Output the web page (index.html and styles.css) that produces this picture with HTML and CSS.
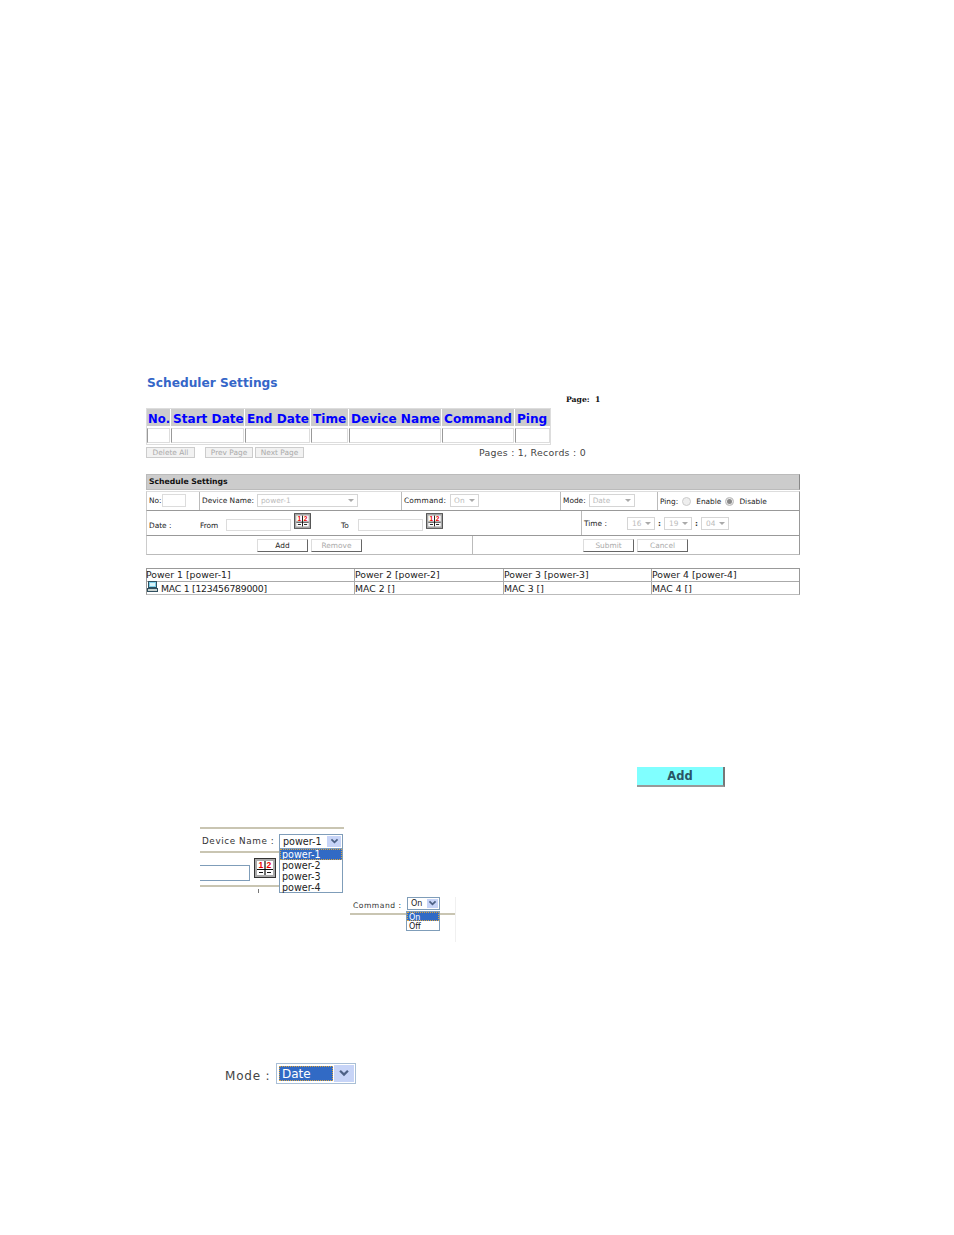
FILE: index.html
```html
<!DOCTYPE html>
<html lang="en">
<head>
<meta charset="utf-8">
<title>Scheduler Settings</title>
<link rel="stylesheet" href="styles.css">
</head>
<body>
<main class="page">
  <section class="panel">
    <h1 class="title">Scheduler Settings</h1>
    <div class="page-no">Page:&nbsp; 1</div>
    <div class="records">
      <div class="rec-row">
        <div class="rh c-no">No.</div><div class="rh c-start">Start Date</div><div class="rh c-end">End Date</div><div class="rh c-time">Time</div><div class="rh c-dev">Device Name</div><div class="rh c-cmd">Command</div><div class="rh c-ping">Ping</div>
      </div>
      <div class="rec-row body-row">
        <div class="rd c-no"></div><div class="rd c-start"></div><div class="rd c-end"></div><div class="rd c-time"></div><div class="rd c-dev"></div><div class="rd c-cmd"></div><div class="rd c-ping"></div>
      </div>
    </div>
    <div class="pager">
      <button class="btn b-del">Delete All</button>
      <button class="btn b-prev">Prev Page</button>
      <button class="btn b-next">Next Page</button>
      <span class="count">Pages : 1, Records : 0</span>
    </div>

    <div class="settings">
      <div class="set-head">Schedule Settings</div>
      <div class="set-row r1">
        <div class="cell s-no">No:<span class="inp i-no"></span></div>
        <div class="cell s-dev">Device Name:<span class="sel sl-dev">power-1<i class="caret"></i></span></div>
        <div class="cell s-cmd"><span class="l-cmd">Command:</span><span class="sel sl-cmd">On<i class="caret"></i></span></div>
        <div class="cell s-mode">Mode:<span class="sel sl-mode">Date<i class="caret"></i></span></div>
        <div class="cell s-ping">Ping:<i class="radio"></i><span>Enable</span><i class="radio on"></i><span>Disable</span></div>
      </div>
      <div class="set-row r2">
        <div class="cell s-date">
          <span class="l-date">Date :</span><span class="l-from">From</span><span class="inp i-date"></span>
          <svg class="cal" viewBox="0 0 22 20"><rect x=".5" y=".5" width="21" height="19" fill="#aaa" stroke="#333"/><rect x="3" y="3" width="16" height="14" fill="#fff"/><text x="4.6" y="10" class="cal-n">1</text><text x="12.6" y="10" class="cal-n">2</text><path d="M3 11.5h16M5 14.5h4M13 14.5h4M11 3v14" stroke="#111" stroke-width="1.2"/></svg>
          <span class="l-to">To</span><span class="inp i-date"></span>
          <svg class="cal" viewBox="0 0 22 20"><rect x=".5" y=".5" width="21" height="19" fill="#aaa" stroke="#333"/><rect x="3" y="3" width="16" height="14" fill="#fff"/><text x="4.6" y="10" class="cal-n">1</text><text x="12.6" y="10" class="cal-n">2</text><path d="M3 11.5h16M5 14.5h4M13 14.5h4M11 3v14" stroke="#111" stroke-width="1.2"/></svg>
        </div>
        <div class="cell s-time">
          <span class="l-time">Time :</span><span class="sel sl-t">16<i class="caret"></i></span><b>:</b><span class="sel sl-t">19<i class="caret"></i></span><b>:</b><span class="sel sl-t">04<i class="caret"></i></span>
        </div>
      </div>
      <div class="set-row r3">
        <div class="cell s-left"><button class="btn2 dark">Add</button><button class="btn2">Remove</button></div>
        <div class="cell s-right"><button class="btn2">Submit</button><button class="btn2">Cancel</button></div>
      </div>
    </div>

    <div class="power">
      <div class="p-row top">
        <div class="p-cell p1">Power 1 [power-1]</div><div class="p-cell p2">Power 2 [power-2]</div><div class="p-cell p3">Power 3 [power-3]</div><div class="p-cell p4">Power 4 [power-4]</div>
      </div>
      <div class="p-row">
        <div class="p-cell p1"><svg class="pc" viewBox="0 0 11 11"><rect x="1.5" y=".5" width="8" height="6" fill="#7fd0ea" stroke="#2f4f5f"/><rect x="3" y="2" width="5" height="3" fill="#d8f4fa"/><rect x=".5" y="7.5" width="10" height="3" fill="#c9d2cf" stroke="#2f4f5f"/></svg><span class="mac1">MAC 1 [123456789000]</span></div><div class="p-cell p2">MAC 2 []</div><div class="p-cell p3">MAC 3 []</div><div class="p-cell p4">MAC 4 []</div>
      </div>
    </div>
  </section>

  <section class="fig-add"><button class="cyan">Add</button></section>

  <section class="fig-device">
    <div class="rule"></div>
    <div class="dev-row"><span class="dev-label">Device Name :</span>
      <span class="xp-sel dev-sel">power-1<i class="xp-arrow"><svg viewBox="0 0 10 8"><path d="M1.5 1.5 5 5l3.5-3.5" fill="none" stroke="#4d6185" stroke-width="2"/></svg></i></span></div>
    <div class="rule short r-a"></div>
    <div class="date-row"><span class="xp-inp"></span>
      <svg class="cal big" viewBox="0 0 22 20"><rect x=".5" y=".5" width="21" height="19" fill="#aaa" stroke="#333"/><rect x="3" y="3" width="16" height="14" fill="#fff"/><text x="4.6" y="10" class="cal-n">1</text><text x="12.6" y="10" class="cal-n">2</text><path d="M3 11.5h16M5 14.5h4M13 14.5h4M11 3v14" stroke="#111" stroke-width="1.2"/></svg></div>
    <div class="rule short r-b"></div>
    <i class="tick"></i>
    <div class="xp-list dev-list"><div class="opt on">power-1</div><div class="opt">power-2</div><div class="opt">power-3</div><div class="opt">power-4</div></div>
  </section>

  <section class="fig-cmd">
    <div class="cmd-row"><span class="cmd-label">Command :</span>
      <span class="xp-sel cmd-sel">On<i class="xp-arrow"><svg viewBox="0 0 10 8"><path d="M1.5 1.5 5 5l3.5-3.5" fill="none" stroke="#4d6185" stroke-width="2"/></svg></i></span></div>
    <div class="rule cmd-rule"></div>
    <div class="xp-list cmd-list"><div class="opt on">On</div><div class="opt">Off</div></div>
  </section>

  <section class="fig-mode">
    <span class="mode-label">Mode :</span>
    <span class="xp-sel mode-sel"><span class="mode-val">Date</span><i class="xp-arrow"><svg viewBox="0 0 10 8"><path d="M1.5 1.5 5 5l3.5-3.5" fill="none" stroke="#4d6185" stroke-width="2"/></svg></i></span>
  </section>
</main>
</body>
</html>
```
FILE: styles.css
```css
* { box-sizing: border-box; }
html, body { margin: 0; background: #fff; }
body { font-family: "DejaVu Sans", sans-serif; color: #222; }
.page { width: 954px; height: 1235px; overflow: hidden; padding-top: 375px; }
button { font-family: inherit; padding: 0; }

.panel { margin-left: 146px; width: 654px; height: 220px; }
.title { margin: 0 0 0 1px; font-size: 12.2px; line-height: 16px; font-weight: bold; color: #3566c8; }
.page-no { margin: 3px 0 0 420px; height: 10px; font: bold 7.7px/12px "DejaVu Serif", serif; color: #111; }
.records { margin: 4px 0 0 0; width: 405px; height: 37px; border: 1px solid #ddd; }
.rec-row { display: flex; gap: 1px; height: 17px; }
.body-row { margin-top: 2px; height: 15px; }
.rh { background: #ccc; color: #00f; font-size: 12.1px; font-weight: bold; line-height: 20px; padding-left: 2px; white-space: nowrap; }
.rh.c-no { padding-left: 1px; font-size: 11.6px; }
.rd { border: 1px solid #ddd; border-left-color: #999; }
.c-no { width: 23px; } .c-start { width: 73px; } .c-end { width: 65px; } .c-time { width: 37px; } .c-dev { width: 92px; } .c-cmd { width: 72px; } .c-ping { width: 35px; }

.pager { display: flex; align-items: center; height: 11px; margin-top: 2px; }
.btn { height: 11px; background: #f2f2f2; border: 1px solid #ccc; color: #aaa; font-size: 7.4px; line-height: 9px; }
.b-del { width: 49px; } .b-prev { width: 48px; margin-left: 10px; } .b-next { width: 49px; margin-left: 2px; }
.count { margin-left: 175px; font-size: 9.4px; letter-spacing: .27px; color: #444; white-space: nowrap; }

.settings { margin-top: 16px; width: 654px; height: 81px; font-size: 7.4px; color: #222; }
.set-head { height: 16px; background: #ccc; border: 1px solid #bbb; border-right-color: #888; font-size: 7.7px; font-weight: bold; line-height: 14px; padding-left: 2px; color: #111; }
.set-row { display: flex; border-right: 1px solid #999; border-bottom: 1px solid #999; border-left: 1px solid #ccc; }
.r1 { margin-top: 1px; height: 20px; border-top: 1px solid #ddd; }
.r2 { height: 25px; }
.r3 { height: 19px; border-bottom-color: #bbb; }
.cell { display: flex; align-items: center; height: 100%; border-right: 1px solid #bbb; white-space: nowrap; padding-left: 2px; }
.cell:last-child { border-right: 0; }
.s-no { width: 53px; padding-bottom: 1px; } .s-dev { width: 202px; padding-left: 2px; padding-bottom: 1px; } .s-cmd { width: 159px; padding-bottom: 1px; } .s-mode { width: 97px; padding-bottom: 1px; }
.s-ping { flex: 1; padding-left: 2px; }
.l-cmd { letter-spacing: .2px; }
.inp { display: inline-block; background: #fff; border: 1px solid #dcdcdc; }
.i-no { width: 24px; height: 13px; }
.sel { position: relative; display: inline-block; height: 13px; border: 1px solid #d5d5d5; color: #bbb; line-height: 11px; padding-left: 3px; background: #fff; }
.caret { position: absolute; right: 3px; top: 4px; width: 0; height: 0; border: 3px solid transparent; border-top: 3px solid #aaa; border-bottom: 0; }
.sl-dev { width: 101px; margin-left: 3px; }
.sl-cmd { width: 29px; margin-left: 4px; }
.sl-mode { width: 46px; margin-left: 3px; }
.radio { display: inline-block; width: 9px; height: 9px; border-radius: 50%; border: 1px solid #ccc; background: #eee; margin: 0 5px 0 4px; }
.radio.on { background: #888; box-shadow: inset 0 0 0 1px #eee; margin-left: 4px; }
.s-date { width: 435px; padding-left: 2px; padding-top: 3px; }
.l-date { width: 51px; padding-top: 2px; } .l-from { width: 26px; padding-top: 2px; }
.i-date { width: 65px; height: 12px; }
.cal { width: 17px; height: 16px; margin: -8px 0 0 3px; }
.cal-n { font: bold 8.5px "Liberation Sans", sans-serif; fill: #e00; }
.l-to { margin-left: 30px; width: 17px; padding-top: 2px; }
.s-time { flex: 1; padding-left: 2px; }
.l-time { width: 43px; }
.sl-t { width: 28px; padding-left: 4px; }
.sl-t:first-of-type { width: 29px; }
.s-time b { margin: 0 3px; font-weight: bold; color: #333; }
.btn2 { height: 13px; background: #fff; border: 1px solid #ddd; border-right: 1px solid #666; border-bottom: 1px solid #666; color: #aaa; font-size: 7.4px; width: 51px; }
.btn2.dark { color: #222; border-top-color: #ddd; }
.s-left { width: 326px; padding-left: 110px; gap: 3px; }
.s-right { flex: 1; padding-left: 110px; gap: 3px; }

.power { margin-top: 13px; width: 654px; height: 27px; border: 1px solid #999; border-bottom-color: #bbb; font-size: 9.3px; color: #222; }
.p-row { display: flex; height: 12px; }
.p-row.top .p-cell { padding-bottom: 2px; }
.p-row.top .p1 { text-indent: -1px; }
.p-row + .p-row { height: 13px; border-top: 1px solid #aaa; }
.p-cell { display: flex; align-items: center; height: 100%; border-right: 1px solid #aaa; white-space: nowrap; }
.p-cell:last-child { border-right: 0; }
.p1 { width: 208px; } .p2 { width: 149px; } .p3 { width: 148px; } .p4 { flex: 1; }
.pc { width: 11px; height: 11px; margin: -3px 3px 0 0; }
.mac1 { letter-spacing: -.25px; }

.fig-add { margin: 170px 0 0 637px; height: 20px; }
.cyan { width: 88px; height: 20px; background: #80ffff; border: 0; border-right: 2px solid #777; border-bottom: 2px solid #999; font-size: 11.5px; font-weight: bold; color: #2a5566; line-height: 18px; }

.rule { height: 2px; background: #c9c5b2; }
.fig-device { position: relative; margin: 42px 0 0 200px; width: 144px; height: 66px; }
.dev-row { display: flex; align-items: center; height: 16px; margin-top: 4px; }
.dev-label { width: 79px; padding-left: 2px; font-size: 8.8px; letter-spacing: .6px; color: #333; white-space: nowrap; }
.xp-sel { position: relative; display: inline-block; border: 1px solid #7f9db9; background: #fff; color: #222; white-space: nowrap; }
.dev-sel { width: 64px; height: 15px; font-size: 9.6px; line-height: 13px; padding-left: 3px; }
.xp-arrow { position: absolute; top: 1px; right: 1px; bottom: 1px; display: flex; align-items: center; justify-content: center; width: 14px; background: #c7d4f7; }
.xp-arrow svg { width: 9px; height: 7px; }
.short { width: 79px; }
.r-a { margin-top: 2px; }
.date-row { display: flex; align-items: center; height: 30px; }
.xp-inp { width: 50px; height: 16px; margin-top: 10px; background: #fff; border: 1px solid #7f9db9; border-left: 0; }
.cal.big { width: 22px; height: 20px; margin: 0 0 0 4px; }
.r-b { margin-top: 2px; }
.tick { display: block; width: 1px; height: 4px; margin: 2px 0 0 58px; background: #777; }
.xp-list { position: absolute; background: #fff; border: 1px solid #7f9db9; color: #222; }
.dev-list { left: 79px; top: 21px; width: 64px; height: 45px; font-size: 9.6px; line-height: 11px; }
.opt { padding-left: 2px; height: 11px; white-space: nowrap; }
.opt.on { background: #316ac5; color: #fff; outline: 1px dotted #d9a441; outline-offset: -1px; }

.fig-cmd { position: relative; margin: 4px 0 0 350px; width: 106px; height: 45px; border-right: 1px solid #f0f0f0; }
.cmd-row { display: flex; align-items: center; height: 13px; margin-top: 1px; }
.cmd-label { width: 57px; padding: 4px 0 0 3px; font-size: 7.6px; letter-spacing: .5px; color: #333; white-space: nowrap; }
.cmd-sel { width: 33px; height: 13px; font-size: 8px; line-height: 11px; padding-left: 3px; }
.cmd-sel .xp-arrow { width: 11px; }
.cmd-rule { margin-top: 3px; }
.cmd-list { left: 56px; top: 14px; width: 34px; height: 20px; font-size: 8px; line-height: 9px; }
.cmd-list .opt { height: 9px; line-height: 11px; }

.fig-mode { display: flex; align-items: center; margin: 121px 0 0 225px; height: 21px; }
.mode-label { width: 51px; padding-top: 4px; font-size: 12px; letter-spacing: .8px; color: #444; white-space: nowrap; }
.mode-sel { width: 80px; height: 21px; border-color: #a9bfd6; }
.mode-val { display: block; margin: 2px 0 0 2px; width: 54px; height: 15px; background: #316ac5; color: #fff; font-size: 12px; line-height: 16px; padding-left: 3px; outline: 1px dotted #d9a441; outline-offset: -1px; }
.mode-sel .xp-arrow { width: 20px; }
.mode-sel .xp-arrow svg { width: 12px; height: 9px; }
```
